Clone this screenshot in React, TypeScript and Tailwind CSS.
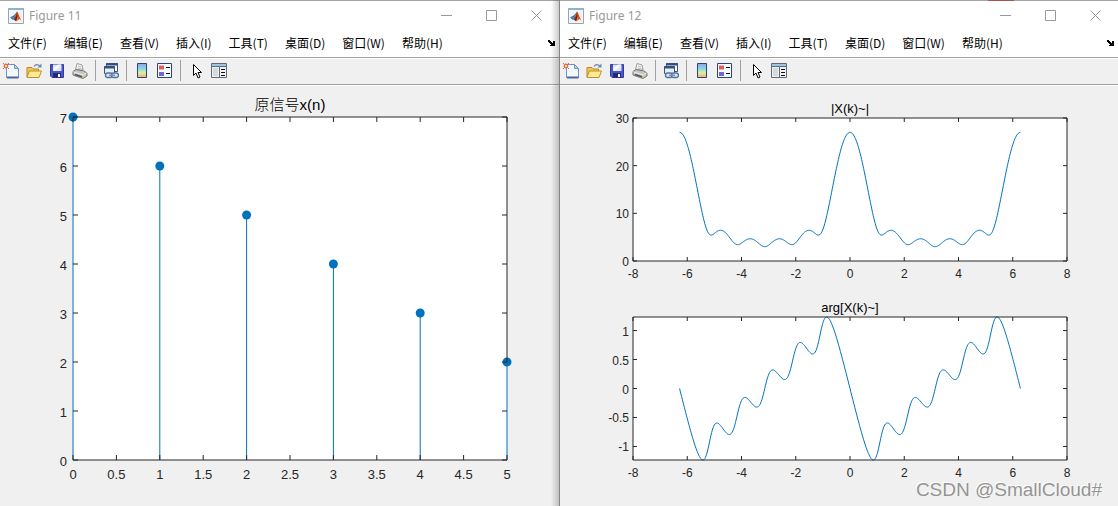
import { useId, type ReactNode } from 'react'

type Point = [number, number]

const SIGNAL = [7, 6, 5, 4, 3, 2]
const MENUS = ['文件(F)', '编辑(E)', '查看(V)', '插入(I)', '工具(T)', '桌面(D)', '窗口(W)', '帮助(H)']
const BLUE = '#0072bd'
const AXIS = '#262626'

// DTFT of the signal, sampled over two periods
const samples = Array.from({ length: 501 }, (_, i) => {
  const w = -2 * Math.PI + (4 * Math.PI * i) / 500
  const re = SIGNAL.reduce((sum, x, n) => sum + x * Math.cos(w * n), 0)
  const im = SIGNAL.reduce((sum, x, n) => sum - x * Math.sin(w * n), 0)
  return { w, mag: Math.hypot(re, im), arg: Math.atan2(im, re) }
})
const magnitude = samples.map((s): Point => [s.w, s.mag])
const phase = samples.map((s): Point => [s.w, s.arg])
const phaseMax = Math.max(...phase.map((p) => p[1]))

export default function App() {
  return (
    <main className="relative grid min-h-screen grid-cols-[560fr_558fr] overflow-hidden bg-[#f0f0f0]">
      <FigureWindow title="Figure 11" className="border-r border-[#858585]">
        <svg viewBox="0 0 559 420" className="block w-full" role="img" aria-label="原信号x(n)">
          <Axes
            title="原信号x(n)"
            top={31}
            bottom={374}
            xRange={[0, 5]}
            yRange={[0, 7]}
            xTicks={[0, 0.5, 1, 1.5, 2, 2.5, 3, 3.5, 4, 4.5, 5]}
            yTicks={[0, 1, 2, 3, 4, 5, 6, 7]}
            large
            stems={SIGNAL.map((v, n): Point => [n, v])}
          />
        </svg>
        <div className="pointer-events-none absolute inset-y-0 right-0 w-2 bg-linear-to-r from-transparent to-black/20" />
      </FigureWindow>
      <FigureWindow title="Figure 12">
        <svg viewBox="0 0 558 420" className="block w-full" role="img" aria-label="|X(k)~|, arg[X(k)~]">
          <Axes
            title="|X(k)~|"
            top={32}
            bottom={175}
            xRange={[-8, 8]}
            yRange={[0, 30]}
            xTicks={[-8, -6, -4, -2, 0, 2, 4, 6, 8]}
            yTicks={[0, 10, 20, 30]}
            line={magnitude}
          />
          <Axes
            title="arg[X(k)~]"
            top={231}
            bottom={374}
            xRange={[-8, 8]}
            yRange={[-phaseMax, phaseMax]}
            xTicks={[-8, -6, -4, -2, 0, 2, 4, 6, 8]}
            yTicks={[-1, -0.5, 0, 0.5, 1]}
            line={phase}
          />
        </svg>
        <div className="pointer-events-none absolute top-0 right-[104px] h-px w-[26px] bg-[#a8524e]" />
      </FigureWindow>
      <p className="absolute right-4 bottom-2 font-['Liberation_Sans',sans-serif] text-[19px] leading-4 text-[#949494] [text-shadow:-1px_-1px_0_#fff]">
        CSDN @SmallCloud#
      </p>
    </main>
  )
}

function FigureWindow({ title, className = '', children }: { title: string; className?: string; children: ReactNode }) {
  return (
    <section className={`relative ${className}`}>
      <header className="border-t border-[#a5a5a5] bg-white">
        <div className="flex h-[29px] items-center pl-2">
          <MatlabIcon />
          <h1 className="ml-[5px] flex-1 font-['Noto_Sans',sans-serif] text-xs text-[#999]">{title}</h1>
          <WindowButton label="Minimize" d="M0 5.5H11" />
          <WindowButton label="Maximize" d="M.5 .5H10.5V10.5H.5Z" />
          <WindowButton label="Close" d="M.5 .5L10.5 10.5M10.5 .5L.5 10.5" />
        </div>
        <nav className="flex h-[27px] items-center gap-[17px] pr-1 pb-px pl-2 font-['Noto_Sans_CJK_SC',sans-serif] text-xs text-black">
          {MENUS.map((menu) => (
            <button key={menu} className="whitespace-nowrap">{menu}</button>
          ))}
          <button aria-label="Dock" className="ml-auto">
            <svg width="7" height="6" viewBox="0 0 7 6" shapeRendering="crispEdges">
              <path d="M0 0h2v1h1v1h1v1h1V1h2v5H2V5h1V4H2V3H1V2H0Z" fill="#000" />
            </svg>
          </button>
        </nav>
      </header>
      <Toolbar />
      {children}
    </section>
  )
}

function WindowButton({ label, d }: { label: string; d: string }) {
  return (
    <button aria-label={label} className="flex h-full w-[45px] items-center justify-center">
      <svg width="11" height="11" viewBox="0 0 11 11" fill="none" stroke="#999">
        <path d={d} />
      </svg>
    </button>
  )
}

function Toolbar() {
  const id = useId()
  return (
    <div className="mb-px flex h-[28px] items-center gap-[7px] border-y border-[#a0a0a0] pb-px pl-[3px] shadow-[inset_0_1px_0_#fff,0_1px_0_#fff]">
      <Tool label="New Figure">
        <path d="M3.5 1.5h8l4 4v9h-12z" fill="#f3f8ff" stroke="#7690c2" />
        <path d="M11.5 1.5v4h4z" fill="#b9d0f2" stroke="#7690c2" />
        <path d="M4 14.5h11.5" stroke="#4d659d" strokeWidth="2" />
        <circle cx="3" cy="3" r="1.8" fill="#ffd9a0" stroke="#e0663a" strokeWidth="1.2" />
        <path d="M0 0l1 1M6 0L5 1M0 6l1-1M6 6L5 5" stroke="#e0663a" />
      </Tool>
      <Tool label="Open File">
        <path d="M1 14V4.500h5l1.500 1.500h5V14z" fill="#f2c64e" stroke="#b8892a" />
        <path d="M1 14l2.500-6h12L13 14.500H1z" fill="#ffeb94" stroke="#c0902c" />
        <path d="M8 3.500c2-3 5-2 6 0" fill="none" stroke="#6d87a8" strokeWidth="1.200" />
        <path d="M11.500 4.500h4v-4z" fill="#6d87a8" />
      </Tool>
      <Tool label="Save Figure">
        <path d="M1.500 1.500h13v13H3l-1.500-1.500z" fill="#4c55cc" stroke="#353b9c" />
        <path d="M4 1.500h8.500V8H4z" fill="#dbe7fb" />
        <path d="M4 6l5-4.500h3.500L6 8H4z" fill="#f8fcff" />
        <path d="M4 10h8v4.500H4z" fill="#222a73" />
        <path d="M9 11h2v3H9z" fill="#fff" />
      </Tool>
      <Tool label="Print Figure">
        <path d="M3.500 7L5 .5l5 1.500 1 5z" fill="#fafafa" stroke="#999" />
        <path d="M6 3l3 1M5.500 5l4 1" stroke="#b7b7b7" />
        <path d="M1 8.500l3-2 8 1.500 3 2v3L11 15.500 1 12z" fill="#c4c4c4" stroke="#777" />
        <path d="M1.500 9l9.500 3 3.500-2" fill="none" stroke="#f1f1f1" />
        <path d="M3 11.500l7 2.300" stroke="#555" strokeWidth="1.500" />
        <circle cx="12.500" cy="12.500" r="1" fill="#d9cf4d" />
      </Tool>
      <Separator />
      <Tool label="Link Plot">
        <path d="M3.500 .5h11v8h-11z" fill="#fff" stroke="#365080" />
        <path d="M3 1.500h12" stroke="#365080" strokeWidth="2" />
        <path d="M1.500 3.500h10v7h-10z" fill="#e4ecf7" stroke="#365080" />
        <path d="M1 4.500h11" stroke="#365080" strokeWidth="2" />
        <rect x="2.500" y="10" width="7" height="4.500" rx="2.200" fill="#dce7f5" stroke="#56749c" strokeWidth="1.400" />
        <rect x="8.500" y="10" width="7" height="4.500" rx="2.200" fill="#dce7f5" stroke="#56749c" strokeWidth="1.400" />
        <path d="M6 12.300h6" stroke="#7590b4" strokeWidth="1.500" />
      </Tool>
      <Separator />
      <Tool label="Insert Colorbar">
        <linearGradient id={id} x2="0" y2="1">
          <stop offset="0" stopColor="#9e9ce8" />
          <stop offset=".35" stopColor="#7fd5ef" />
          <stop offset=".65" stopColor="#d9ee9b" />
          <stop offset="1" stopColor="#f6ab83" />
        </linearGradient>
        <path d="M3.500 .5h9v14h-9z" fill={`url(#${id})`} stroke="#2b4474" />
      </Tool>
      <Tool label="Insert Legend">
        <path d="M.5 .5h14v14H.5z" fill="#f8fbff" stroke="#2b4474" />
        <path d="M2 2.500h5v4H2z" fill="#e65b60" />
        <path d="M2 9h5v4H2z" fill="#6669e3" />
        <path d="M9 4.500h4M9 10.500h4" stroke="#111" />
      </Tool>
      <Separator />
      <Tool label="Edit Plot">
        <path d="M5.500 1.500v11l2.500-2.500 2 5 2-1-2-4.500h3.500z" fill="#fff" stroke="#000" />
      </Tool>
      <Tool label="Property Inspector">
        <path d="M.5 .5h15v14H.5z" fill="#f0f0f0" stroke="#5f6c78" />
        <path d="M1 1h14v2H1z" fill="#9cc7df" />
        <path d="M1 3.500h14M8.500 4v10" stroke="#5f6c78" />
        <path d="M2 5h5v8H2z" fill="#d9d9d9" />
        <path d="M10 6.500h4M10 9.500h4M10 12.500h4" stroke="#111" />
      </Tool>
    </div>
  )
}

function Tool({ label, children }: { label: string; children: ReactNode }) {
  return (
    <button aria-label={label} className="shrink-0">
      <svg width="16" height="16" viewBox="0 0 16 16">{children}</svg>
    </button>
  )
}

function Separator() {
  return <span className="h-[21px] w-px shrink-0 bg-[#a0a0a0]" />
}

function MatlabIcon() {
  return (
    <svg width="16" height="16" viewBox="0 0 16 16" className="shrink-0">
      <path d="M.5 .5h15v15H.5z" fill="#f4f4f4" stroke="#9aa5ae" />
      <path d="M0 0h16v2H0z" fill="#8fb3cf" />
      <path d="M2 9.500l3.500-2L8 5l1-1-2.500 7L5 12z" fill="#3c7fbd" />
      <path d="M6 11.500L9 3.500c1.500 1 2 5 4.500 9-2-1.500-2.500-1.500-3.500-.5l-2 1.500z" fill="#d9541e" />
      <path d="M9 3.500c-.5 3-1 6-3 8l1.500 1.500c2-2 2.500-5 1.500-9.500z" fill="#6f2314" />
      <path d="M9.500 5c1 2 0 5-.5 7l1-1z" fill="#f7a63b" />
    </svg>
  )
}

interface AxesProps {
  title: string
  top: number
  bottom: number
  xRange: Point
  yRange: Point
  xTicks: number[]
  yTicks: number[]
  large?: boolean
  line?: Point[]
  stems?: Point[]
}

function Axes({ title, top, bottom, xRange, yRange, xTicks, yTicks, large = false, line, stems }: AxesProps) {
  const left = 73
  const right = 507
  const tick = large ? 5 : 4
  const sx = (v: number) => left + ((v - xRange[0]) / (xRange[1] - xRange[0])) * (right - left)
  const sy = (v: number) => bottom - ((v - yRange[0]) / (yRange[1] - yRange[0])) * (bottom - top)

  return (
    <g className="font-['Liberation_Sans','Noto_Sans_CJK_SC',sans-serif]">
      <rect x={left} y={top} width={right - left} height={bottom - top} fill="#fff" />
      {line && (
        <polyline points={line.map(([x, y]) => `${sx(x)},${sy(y)}`).join(' ')} fill="none" stroke={BLUE} />
      )}
      {stems?.map(([x, y]) => (
        <g key={x}>
          <path d={`M${sx(x)} ${bottom}V${sy(y)}`} stroke={BLUE} />
          <circle cx={sx(x)} cy={sy(y)} r="4.5" fill={BLUE} />
        </g>
      ))}
      <g stroke={AXIS}>
        <path d={`M${left} ${top}H${right}M${left} ${bottom}H${right}`} />
        {/* the outer stems stand in for the side lines */}
        {!stems && <path d={`M${left} ${top}V${bottom}M${right} ${top}V${bottom}`} />}
        {xTicks.map((v) => (
          <path key={v} d={`M${sx(v)} ${bottom}v${-tick}M${sx(v)} ${top}v${tick}`} />
        ))}
        {yTicks.map((v) => (
          <path key={v} d={`M${left} ${sy(v)}h${tick}M${right} ${sy(v)}h${-tick}`} />
        ))}
      </g>
      {stems && <path d={`M${right} ${top}V${sy(stems[stems.length - 1][1])}`} stroke={AXIS} />}
      <g fill={AXIS} fontSize={large ? 13 : 12}>
        {xTicks.map((v) => (
          <text key={v} x={sx(v)} y={bottom + (large ? 19 : 17)} textAnchor="middle">{v}</text>
        ))}
        {yTicks.map((v) => (
          <text key={v} x={large ? 67 : 69} y={sy(v) + (large ? 6 : 5)} textAnchor="end">{v}</text>
        ))}
      </g>
      <text
        x={290}
        y={top - (large ? 7 : 5)}
        textAnchor="middle"
        fontSize={large ? 15 : 13}
        fontWeight="300"
        fill="#000"
      >
        {title}
      </text>
    </g>
  )
}
